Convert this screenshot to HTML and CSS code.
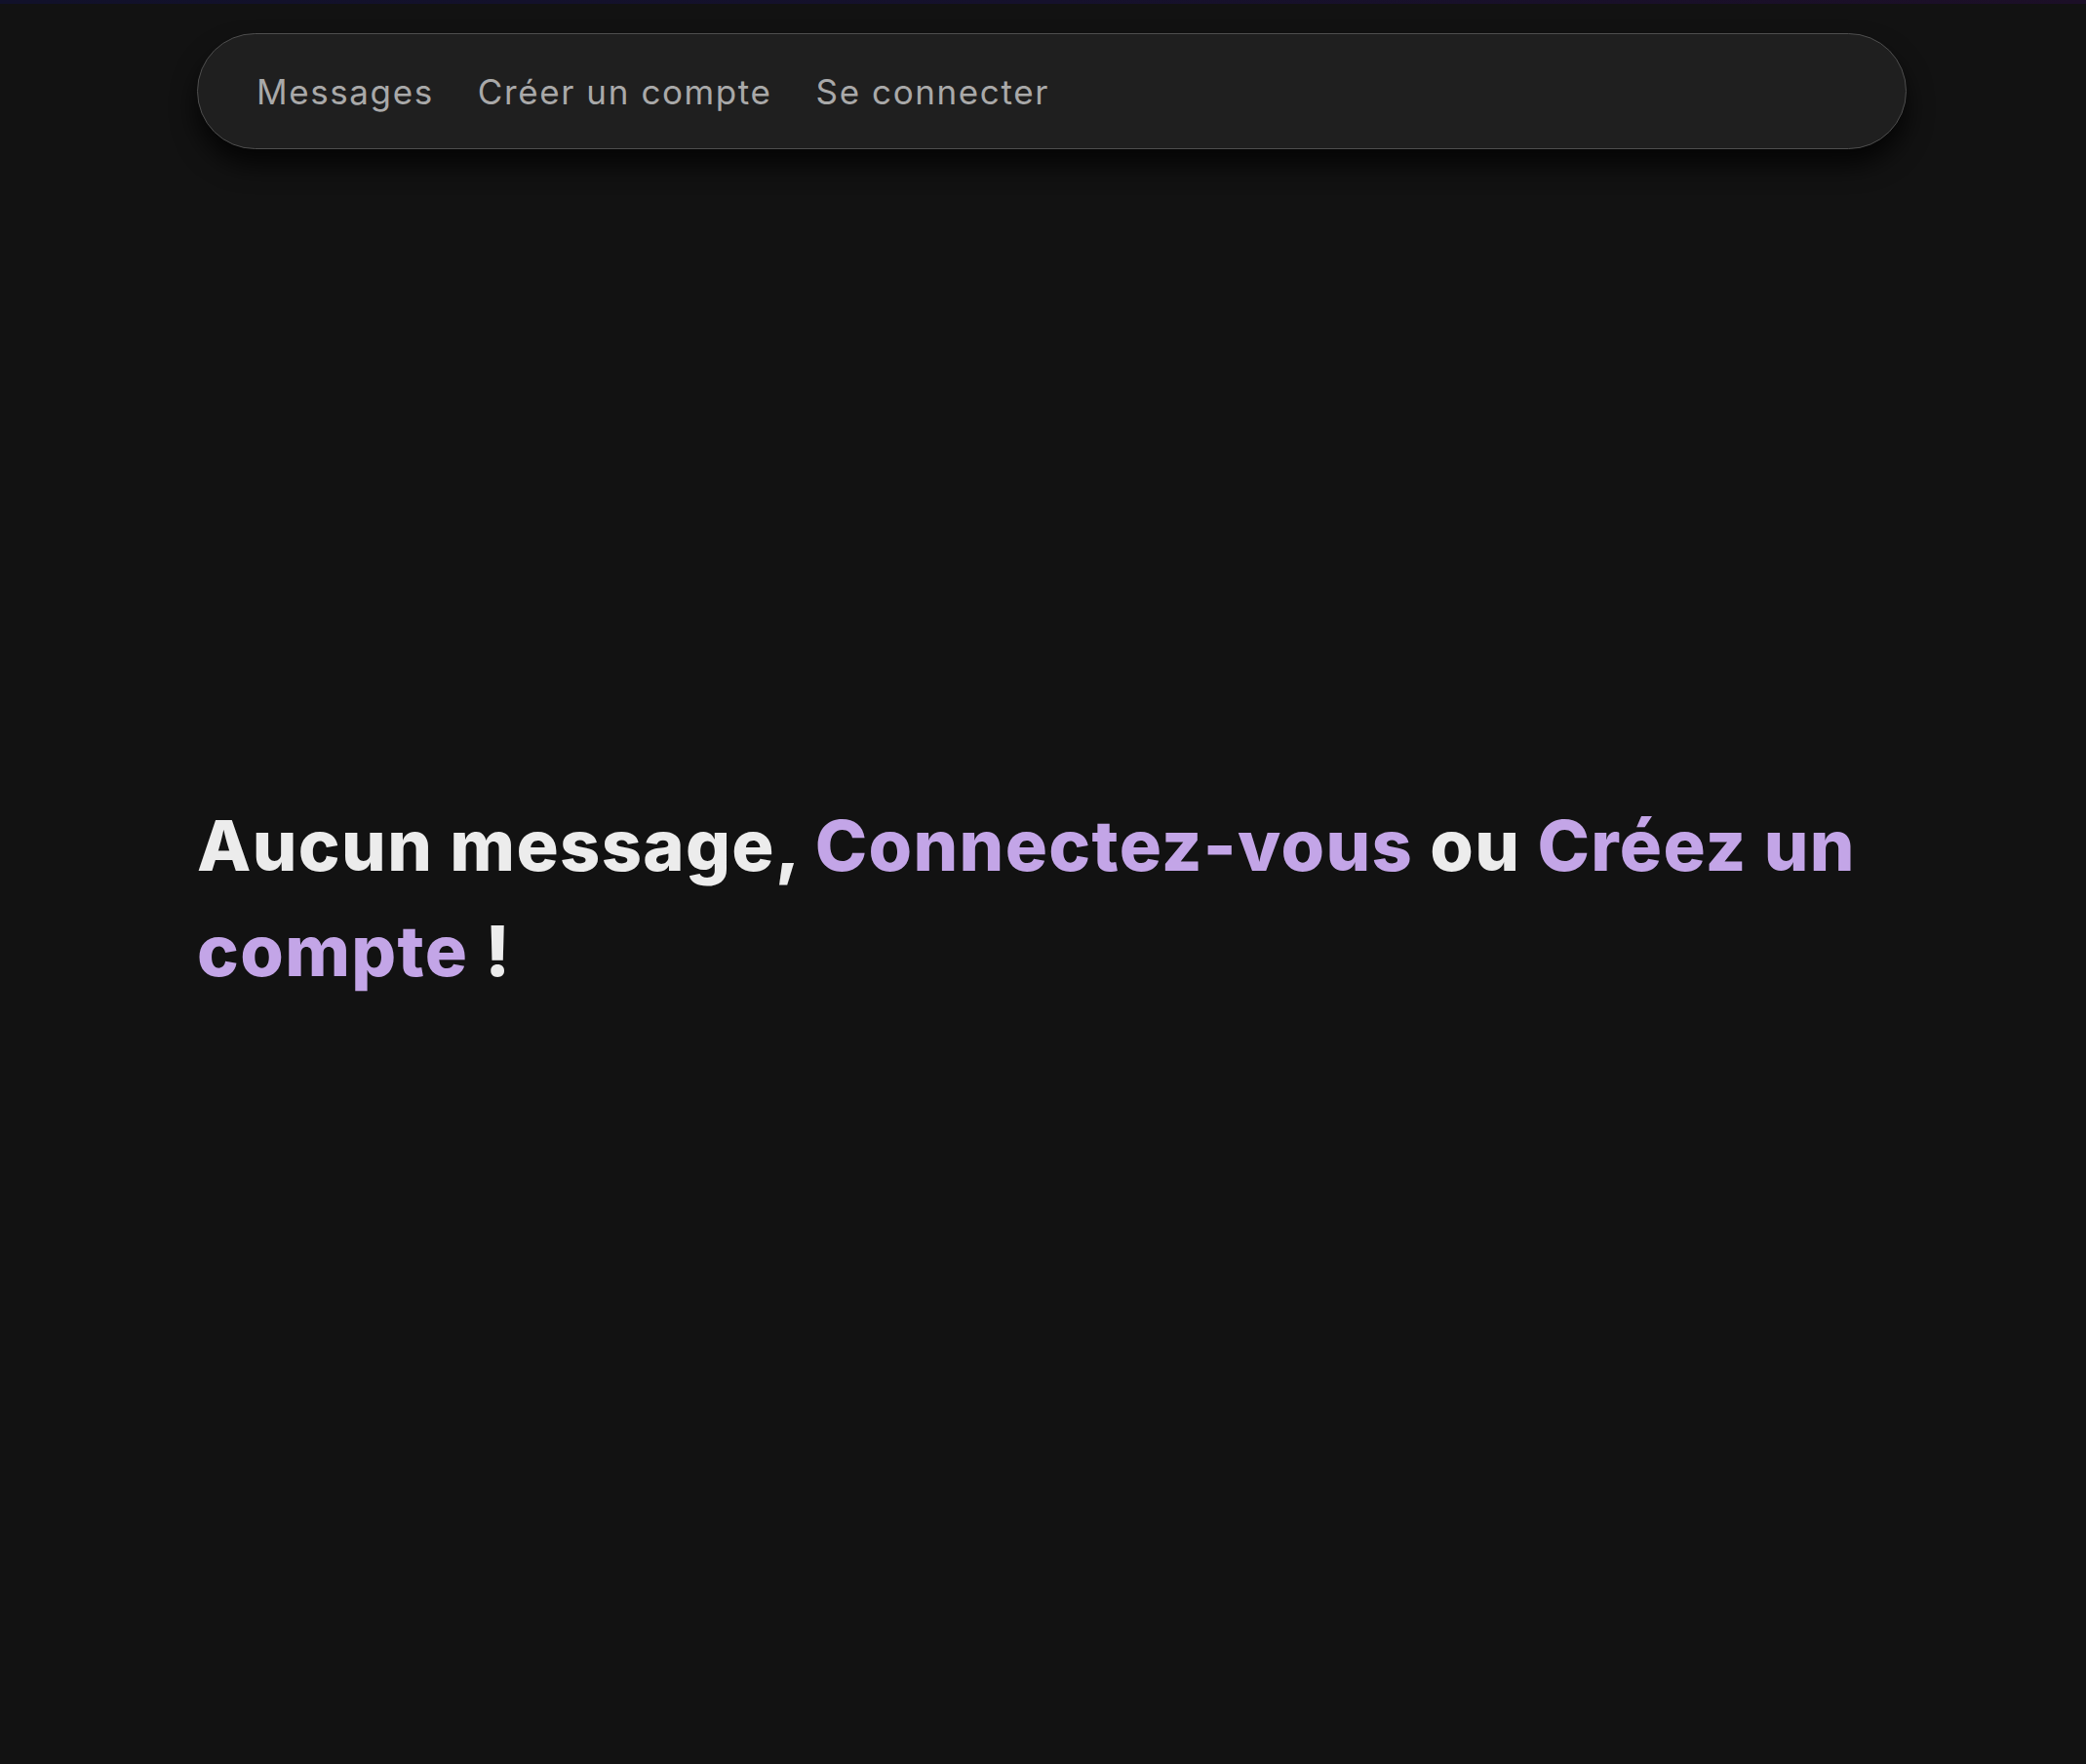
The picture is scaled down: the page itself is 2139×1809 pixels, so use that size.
FILE: index.html
```html
<!DOCTYPE html>
<html lang="fr">
<head>
<meta charset="utf-8">
<title>Messages</title>
<link rel="stylesheet" href="styles.css">
</head>
<body>
<div class="topline"></div>
<header class="header">
  <nav class="nav">
    <a class="nav-link" href="#">Messages</a>
    <a class="nav-link" href="#">Créer un compte</a>
    <a class="nav-link" href="#">Se connecter</a>
  </nav>
</header>
<main class="main">
  <h1 class="empty">Aucun message, <a class="accent" href="#">Connectez-vous</a> ou <a class="accent" href="#">Créez un compte</a> !</h1>
</main>
</body>
</html>
```
FILE: styles.css
```css
html, body {
  margin: 0;
  padding: 0;
  background: #121212;
  min-height: 100%;
}
body {
  font-family: "Inter", "Open Sans", sans-serif;
  color: #ececec;
}
.topline {
  height: 4px;
  background: linear-gradient(90deg, #11112a 0%, #15112c 50%, #1c0f27 100%);
}
.header {
  padding: 30px 184px 0 202px;
}
.nav {
  display: flex;
  align-items: center;
  gap: 45px;
  height: 117px;
  padding: 0 60px;
  background: #1f1f1f;
  border: 1px solid #4e4e4e;
  border-radius: 60px;
  box-shadow: 0 16px 26px rgba(0, 0, 0, 0.75);
}
.nav-link {
  color: #a9a9a9;
  text-decoration: none;
  font-size: 35px;
  letter-spacing: 1.6px;
  font-weight: 400;
}
.main {
  padding: 660px 184px 0 202px;
}
.empty {
  margin: 0;
  font-size: 72px;
  line-height: 108px;
  letter-spacing: 1.35px;
  font-weight: 800;
  color: #ececec;
}
.accent {
  color: #c3a5e7;
  text-decoration: none;
}
```
